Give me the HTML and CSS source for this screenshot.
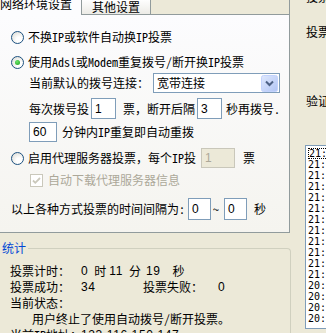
FILE: index.html
```html
<!DOCTYPE html>
<html lang="zh-CN">
<head>
    <meta charset="UTF-8">
    <title>投票设置</title>
    <link rel="stylesheet" href="styles.css">
</head>
<body>
    <div class="left">
        <div class="tabs">
            <div class="tab-active"><span>网络环境设置</span></div>
            <div class="tab">其他设置</div>
            <div class="tab-fill"></div>
        </div>

        <div class="panel">
            <div class="row radio-row r1">
                <span class="radio"></span>
                <span class="lbl">不换IP或软件自动换IP投票</span>
            </div>
            <div class="row radio-row r2">
                <span class="radio on"></span>
                <span class="lbl">使用Adsl或Modem重复拨号/断开换IP投票</span>
            </div>
            <div class="row indent r3">
                <span>当前默认的拨号连接：</span>
                <div class="select">
                    <span>宽带连接</span>
                    <svg class="drop" width="17" height="17" viewBox="0 0 17 17">
                        <defs>
                            <linearGradient id="dg" x1="0" y1="0" x2="1" y2="1">
                                <stop offset="0" stop-color="#dfe8fd"/>
                                <stop offset="1" stop-color="#b1c5f5"/>
                            </linearGradient>
                        </defs>
                        <rect x="0.5" y="0.5" width="16" height="16" rx="2" fill="url(#dg)" stroke="#c3d3fd"/>
                        <path d="M5 6.5 L8.5 10 L12 6.5" fill="none" stroke="#4d6185" stroke-width="2"/>
                    </svg>
                </div>
            </div>
            <div class="row indent r4">
                <span>每次拨号投</span>
                <span class="input w25 ml2">1</span>
                <span class="ml7">票，断开后隔</span>
                <span class="input w25 ml2">3</span>
                <span class="ml4">秒再拨号.</span>
            </div>
            <div class="row indent r5">
                <span class="input w28">60</span>
                <span class="ml5">分钟内IP重复即自动重拨</span>
            </div>
            <div class="row radio-row r6">
                <span class="radio"></span>
                <span class="lbl">启用代理服务器投票，每个IP投</span>
                <span class="input off w34 ml5">1</span>
                <span class="ml8">票</span>
            </div>
            <div class="row check-row r7">
                <svg class="check" width="13" height="13" viewBox="0 0 13 13">
                    <rect x="0.5" y="0.5" width="12" height="12" fill="#fff" stroke="#cac8bb"/>
                    <path d="M3 6.5 L5.3 8.8 L10 4" fill="none" stroke="#cac8bb" stroke-width="1.8"/>
                </svg>
                <span class="gray">自动下载代理服务器信息</span>
            </div>
            <div class="row r8">
                <span>以上各种方式投票的时间间隔为:</span>
                <span class="input w23 ml3">0</span>
                <span class="tilde">~</span>
                <span class="input w23">0</span>
                <span class="ml7">秒</span>
            </div>
        </div>

        <div class="group">
            <span class="legend">统计</span>
            <div class="stat"><span class="key">投票计时：</span><span class="num">0</span><span class="u1">时</span><span class="num ml3">11</span><span class="u2">分</span><span class="num ml5">19</span><span class="u3">秒</span></div>
            <div class="stat"><span class="key">投票成功：</span><span class="num w62">34</span><span class="key w75">投票失败：</span><span class="num">0</span></div>
            <div class="stat"><span class="key">当前状态：</span></div>
            <div class="stat status">用户终止了使用自动拨号/断开投票。</div>
            <div class="stat"><span class="key">当前IP地址：</span><span class="num">123.116.150.147</span></div>
        </div>
    </div>

    <div class="right">
        <div class="side-label s1">投票地址：</div>
        <div class="side-label s2">投票次数：</div>
        <div class="side-label s3">验证码：</div>
        <div class="log">
            <div class="log-item focus">21:32:15 拨号成功</div>
            <div class="log-item">21:31:58 投票成功</div>
            <div class="log-item">21:31:40 投票成功</div>
            <div class="log-item">21:31:22 投票成功</div>
            <div class="log-item">21:31:05 投票成功</div>
            <div class="log-item">21:30:47 投票成功</div>
            <div class="log-item">21:30:29 投票成功</div>
            <div class="log-item">21:30:12 投票成功</div>
            <div class="log-item">21:29:54 投票成功</div>
            <div class="log-item">21:29:36 投票成功</div>
            <div class="log-item">21:19:18 投票成功</div>
            <div class="log-item">21:09:01 投票成功</div>
            <div class="log-item">20:58:43 投票成功</div>
            <div class="log-item">20:48:25 投票成功</div>
            <div class="log-item">20:38:07 投票成功</div>
            <div class="log-item">20:27:50 投票成功</div>
        </div>
    </div>
</body>
</html>
```

FILE: styles.css
```css
* {
    box-sizing: border-box;
}

body {
    margin: 0;
    width: 326px;
    height: 333px;
    overflow: hidden;
    display: flex;
    background-color: #ece9d8;
    color: #000;
    font-family: "Noto Sans Mono CJK SC", "Noto Sans CJK SC", sans-serif;
    font-size: 12px;
    line-height: 12px;
    white-space: nowrap;
}

.left {
    width: 292px;
    flex: none;
}

/* tabs */
.tabs {
    display: flex;
    height: 15px;
    width: 290px;
}

.tab-active {
    width: 81px;
    background-color: #fcfcfe;
}

.tab-active span {
    display: block;
    margin-top: -2px;
}

.tab {
    width: 70px;
    border: 1px solid #919b9c;
    border-top: none;
    background: linear-gradient(#fefefe, #ecebe6);
    text-align: center;
    padding-top: 1px;
}

.tab-fill {
    flex: 1;
    border-bottom: 1px solid #919b9c;
    border-right: 1px solid #919b9c;
}

.panel {
    width: 290px;
    height: 218px;
    border-right: 1px solid #919b9c;
    border-bottom: 1px solid #919b9c;
    background: linear-gradient(#fcfcfe, #f5f4ef);
    padding-top: 12px;
}

.row {
    display: flex;
    align-items: center;
    height: 20px;
}

.radio-row {
    padding-left: 11px;
}

.indent {
    padding-left: 29px;
}

.check-row {
    padding-left: 30px;
}

.r2 { margin-top: 5px; }
.r3 { margin-top: 1px; }
.r4 { margin-top: 5px; height: 21px; }
.r5 { margin-top: 3px; }
.r6 { margin-top: 6px; }
.r7 { margin-top: 2px; }
.r8 { margin-top: 8px; padding-left: 11px; height: 22px; }

.radio {
    width: 13px;
    height: 13px;
    border-radius: 50%;
    border: 1px solid #1c5180;
    background: radial-gradient(circle at 65% 70%, #ffffff 25%, #d8d7cf 100%);
    display: flex;
    align-items: center;
    justify-content: center;
    flex: none;
}

.radio.on::after {
    content: "";
    width: 5px;
    height: 5px;
    border-radius: 50%;
    background: radial-gradient(circle at 40% 35%, #6be86b, #1d9b1d);
}

.lbl {
    margin-left: 4px;
}

.check {
    flex: none;
}

.gray {
    color: #aca899;
    margin-left: 5px;
}

.select {
    margin-left: 4px;
    width: 127px;
    height: 20px;
    border: 1px solid #7f9db9;
    background-color: #fff;
    display: flex;
    align-items: center;
    justify-content: space-between;
    padding-left: 3px;
    padding-right: 1px;
}

.input {
    height: 100%;
    border: 1px solid #7f9db9;
    background-color: #fff;
    display: flex;
    align-items: center;
    padding-left: 3px;
    font-family: "Liberation Sans", sans-serif;
    font-size: 12px;
}

.input.off {
    background-color: #ece9d8;
    border-color: #c9c7ba;
    color: #aca899;
}

.w23 { width: 23px; }
.w25 { width: 25px; }
.w28 { width: 28px; }
.w34 { width: 34px; }

.ml2 { margin-left: 2px; }
.ml3 { margin-left: 3px; }
.ml4 { margin-left: 4px; }
.ml5 { margin-left: 5px; }
.ml7 { margin-left: 7px; }
.ml8 { margin-left: 8px; }

.tilde {
    width: 13px;
    padding-left: 2px;
}

/* statistics group */
.group {
    margin-top: 15px;
    margin-left: -6px;
    width: 297px;
    height: 100px;
    border-top: 1px solid #d0d0bf;
    border-right: 1px solid #d0d0bf;
    border-top-right-radius: 4px;
    padding-left: 16px;
}

.legend {
    display: inline-block;
    margin-top: -7px;
    margin-left: -10px;
    padding: 0 2px;
    background-color: #ece9d8;
    color: #0046d5;
    vertical-align: top;
}

.stat {
    display: flex;
    height: 16px;
    align-items: center;
}

.legend + .stat {
    margin-top: 2px;
}

.key {
    width: 71px;
}

.w75 { width: 75px; }
.w62 { width: 62px; }

.num {
    font-family: "Liberation Sans", sans-serif;
    letter-spacing: 0.6px;
}

.u1 { margin-left: 6px; }
.u2 { margin-left: 6px; }
.u3 { margin-left: 12px; }

.status {
    padding-left: 22px;
}

/* right column, clipped by the window */
.right {
    flex: 1;
    padding-left: 14px;
    display: flex;
    flex-direction: column;
    overflow: hidden;
}

.side-label {
    height: 12px;
}

.s1 { margin-top: -9px; }
.s2 { margin-top: 23px; }
.s3 { margin-top: 57px; }

.log {
    margin-top: 38px;
    margin-left: -1px;
    width: 120px;
    height: 184px;
    border: 1px solid #7f9db9;
    background-color: #fff;
    padding: 2px 0 0 2px;
    font-family: "DejaVu Sans Mono", monospace;
    font-size: 10px;
}

.log-item {
    height: 11px;
    line-height: 11px;
}

.log-item.focus {
    outline: 1px dotted #000;
    outline-offset: -1px;
    padding-left: 1px;
}
```
